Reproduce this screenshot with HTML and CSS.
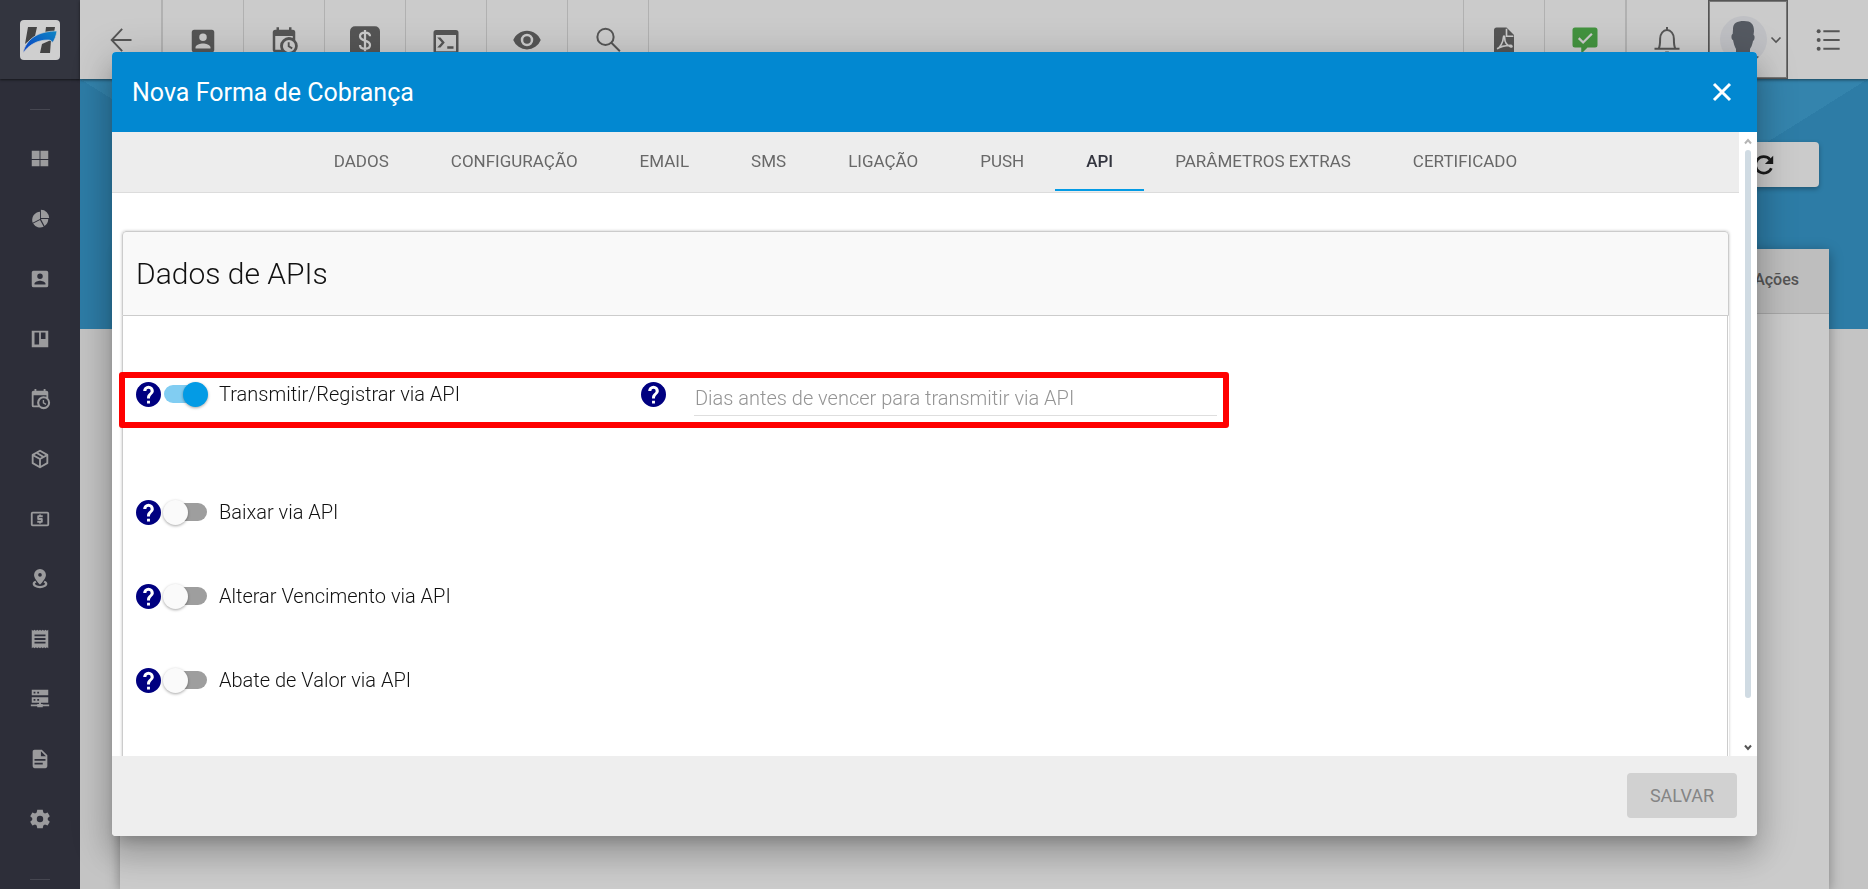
FILE: index.html
```html
<!DOCTYPE html>
<html lang="pt-BR">
<head>
<meta charset="utf-8">
<title>Nova Forma de Cobrança</title>
<link rel="stylesheet" href="styles.css">
</head>
<body>
<svg class="sprite" aria-hidden="true">
  <symbol id="help" viewBox="0 0 24 24"><circle cx="12" cy="12" r="11" fill="#fff"/><path fill="currentColor" fill-rule="evenodd" d="M12 0a12 12 0 1 0 0 24 12 12 0 0 0 0-24zm1.400 20.600h-2.800v-2.700h2.800zm2.500-9.300-1.100 1.100c-.86.880-1.400 1.600-1.400 3.400h-2.800V15c0-1.300.54-2.500 1.400-3.400l1.490-1.500c.44-.43.610-.9.610-1.500a2.100 2.100 0 0 0-4.200 0H6.900a5.100 5.100 0 0 1 10.200 0c0 1.060-.53 2.020-1.200 2.700z"/></symbol>
  <symbol id="account" viewBox="0 0 24 24"><path d="M6 17c0-2 4-3.100 6-3.100s6 1.100 6 3.100v1H6m9-9a3 3 0 0 1-6 0 3 3 0 0 1 6 0M3 5v14a2 2 0 0 0 2 2h14a2 2 0 0 0 2-2V5a2 2 0 0 0-2-2H5a2 2 0 0 0-2 2z"/></symbol>
  <symbol id="calendar" viewBox="0 0 24 24"><path d="M15 13h1.500v2.820l2.440 1.410-.75 1.300L15 16.690V13m4-5H5v11h4.670A7 7 0 0 1 19 9.670V8M5 21a2 2 0 0 1-2-2V5c0-1.110.89-2 2-2h1V1h2v2h8V1h2v2h1a2 2 0 0 1 2 2v6.100A7 7 0 0 1 11.100 21H5m11-9.850A4.850 4.850 0 0 0 11.150 16c0 2.680 2.170 4.850 4.850 4.850A4.850 4.850 0 0 0 20.850 16 4.850 4.850 0 0 0 16 11.150z"/></symbol>
</svg>

<div class="app">
  <aside class="sidebar">
    <a class="brand" href="#" aria-label="Início">
      <svg width="40" height="40" viewBox="0 0 40 40">
        <defs><linearGradient id="swoosh" x1="0" y1="1" x2="1" y2="0"><stop offset="0" stop-color="#0a3fc4"/><stop offset="1" stop-color="#0f86c4"/></linearGradient></defs>
        <rect width="40" height="40" rx="4" fill="#cfcfcf"/>
        <path fill="#444" d="M8 7h9l-2 9-10 8zM26 7h9l-1 6-9 2zM22 24l9-4-1 13h-10z"/>
        <path fill="url(#swoosh)" stroke="#cfcfcf" stroke-width=".7" d="M3 33C6 19 18 11 37 11c-1 5-2 9-5 12 0-2-1-3-4-3-11 0-19 5-25 13z"/>
      </svg>
    </a>
    <nav class="menu" aria-label="Menu principal">
      <span class="rule"></span>
      <a href="#" aria-label="Painel"><svg viewBox="0 0 24 24"><path d="M3 12V3h8.500v9zM12.500 12V3H21v9zM3 20v-7h8.500v7zM12.500 20v-7H21v7z"/></svg></a>
      <a href="#" aria-label="Relatórios"><svg viewBox="0 0 24 24"><path d="M13 2a9 9 0 0 1 9 9h-9zM12 4v8l-8 4A9 9 0 0 1 12 4zM13 12h8a9 9 0 0 1-4 7.500zM12 13l4 7.500A9 9 0 0 1 4.500 17z"/></svg></a>
      <a href="#" aria-label="Clientes"><svg><use href="#account"/></svg></a>
      <a href="#" aria-label="Quadro"><svg viewBox="0 0 24 24"><path fill-rule="evenodd" d="M3 3h18v18H3zm3 2v13h5V5zm7 0v7h5V5z"/></svg></a>
      <a href="#" aria-label="Agenda"><svg><use href="#calendar"/></svg></a>
      <a href="#" aria-label="Produtos"><svg viewBox="0 0 24 24"><path d="M21 16.500c0 .38-.21.710-.53.880l-7.900 4.440a.98.980 0 0 1-1.140 0l-7.900-4.440A1 1 0 0 1 3 16.500v-9c0-.38.210-.71.530-.88l7.900-4.440a.98.980 0 0 1 1.140 0l7.900 4.440c.32.170.530.500.530.880v9M12 4.150 10.110 5.220 16 8.610 17.960 7.500 12 4.150M6.040 7.500 12 10.850l1.960-1.100-5.880-3.400L6.040 7.500M5 15.910l6 3.380v-6.710L5 9.210v6.700m14 0v-6.700l-6 3.370v6.710l6-3.380z"/></svg></a>
      <a href="#" aria-label="Financeiro"><svg viewBox="0 0 24 24"><path d="M20 4H4a2 2 0 0 0-2 2v12a2 2 0 0 0 2 2h16a2 2 0 0 0 2-2V6a2 2 0 0 0-2-2m0 14H4V6h16v12M11 17h2v-1h1a1 1 0 0 0 1-1v-3a1 1 0 0 0-1-1h-3v-1h4V8h-2V7h-2v1h-1a1 1 0 0 0-1 1v3a1 1 0 0 0 1 1h3v1H9v2h2z"/></svg></a>
      <a href="#" aria-label="Mapa"><svg viewBox="0 0 24 24"><path fill-rule="evenodd" d="M12 1a6.500 6.500 0 0 0-6.500 6.500C5.500 12 12 18 12 18s6.500-6 6.500-10.500A6.500 6.500 0 0 0 12 1zm0 4.500a2 2 0 1 1 0 4 2 2 0 0 1 0-4zM7 14c-2 .6-3 1.700-3 3.300C4 20 7.500 22 12 22s8-2 8-4.700c0-1.600-1-2.700-3-3.300l-1.200 1.700c1 .3 1.700.8 1.700 1.500 0 1.300-2.500 2.300-5.500 2.300s-5.500-1-5.500-2.300c0-.7.700-1.200 1.700-1.500z"/></svg></a>
      <a href="#" aria-label="Recibos"><svg viewBox="0 0 24 24"><path fill-rule="evenodd" d="M3 22V2l1.500 1L6 2l1.500 1L9 2l1.500 1L12 2l1.500 1L15 2l1.500 1L18 2l1.500 1L21 2v20l-1.500-1-1.500 1-1.500-1-1.500 1-1.500-1-1.500 1-1.500-1L9 22l-1.500-1L6 22l-1.500-1zM6 7v2h12V7zm0 4v2h12v-2zm0 4v2h12v-2z"/></svg></a>
      <a href="#" aria-label="Servidores"><svg viewBox="0 0 24 24"><path fill-rule="evenodd" d="M3 2h18v6H3zm2 2v2h2V4zm4 0v2h2V4zM3 10h18v6h-8v1.500h2V18h7v2h-7v1H9v-1H2v-2h7v-.5h2V16H3zm2 2v2h2v-2zm4 0v2h2v-2z"/></svg></a>
      <a href="#" aria-label="Documentos"><svg viewBox="0 0 24 24"><path d="M13 9h5.500L13 3.500V9M6 2h8l6 6v12a2 2 0 0 1-2 2H6a2 2 0 0 1-2-2V4c0-1.110.89-2 2-2m9 16v-2H6v2h9m3-4v-2H6v2h12z"/></svg></a>
      <a href="#" aria-label="Configurações"><svg viewBox="0 0 24 24"><path fill-rule="evenodd" d="M9 2h6l.6 3 1.800 1 2.900-1 2.400 4-2.200 2v2l2.200 2-2.400 4-2.900-1-1.800 1-.6 3H9l-.6-3-1.800-1-2.900 1-2.400-4 2.200-2v-2L1.300 9l2.400-4 2.900 1 1.800-1zm3 6.500a3.500 3.500 0 1 0 0 7 3.500 3.500 0 0 0 0-7z"/></svg></a>
      <span class="rule"></span>
    </nav>
  </aside>

  <div class="main">
    <header class="topbar">
      <button class="cell first" aria-label="Voltar"><svg viewBox="0 0 24 24"><path class="line" d="M21 12H4.500M13 2.500 4 12l9 9.500"/></svg></button>
      <button class="cell" aria-label="Clientes"><svg><use href="#account" y="1"/></svg></button>
      <button class="cell" aria-label="Agenda"><svg><use href="#calendar" y="1"/></svg></button>
      <button class="cell" aria-label="Financeiro"><svg viewBox="0 0 24 24"><rect y="1" width="24" height="24" rx="4"/><path class="cut" d="M16 9c0-2-1.600-3-4-3s-4 1-4 3c0 4.500 8 2.500 8 7 0 2-1.800 3-4 3s-4-1-4-3M12 4v17"/></svg></button>
      <button class="cell" aria-label="Terminal"><svg viewBox="0 0 24 24"><path d="M18 19v-2h-5v2h5m-9.400-5L5 10h2.600L11 14l-3.400 4H5zM20 21H4V8h16v13m0-17H4a2 2 0 0 0-2 2v15a2 2 0 0 0 2 2h16a2 2 0 0 0 2-2V6a2 2 0 0 0-2-2z"/></svg></button>
      <button class="cell" aria-label="Visualizar"><svg viewBox="0 0 24 24"><path d="M12 9a3 3 0 1 0 0 6 3 3 0 0 0 0-6m0 8a5 5 0 1 1 0-10 5 5 0 0 1 0 10m0-12.500C7 4.500 2.730 7.610 1 12a11.800 11.800 0 0 0 22 0C21.270 7.610 17 4.500 12 4.500z"/></svg></button>
      <button class="cell" aria-label="Pesquisar"><svg viewBox="0 0 24 24"><circle class="line" cx="10" cy="9.500" r="6.500"/><path class="line" d="M14.500 14l7 7"/></svg></button>
      <span class="spacer"></span>
      <button class="cell" aria-label="PDF"><svg viewBox="0 0 24 24"><path d="M6 2h8l6 6v14a2 2 0 0 1-2 2H6a2 2 0 0 1-2-2V4c0-1.110.89-2 2-2z"/><path class="cut thin" d="M14 3v6h5.500M6.500 19c2-.5 5-5.500 5-9 0-1.500 1-1.500 1 0 0 3.500 2 6.500 5 7.500 1.500.3 1-1.300-.5-1.200-4 .2-8 1-10.500 2.700z"/></svg></button>
      <button class="cell" aria-label="Mensagens"><svg class="green" viewBox="0 0 24 24"><path d="M4 2h16a2 2 0 0 1 2 2v12a2 2 0 0 1-2 2h-6l-5 5v-5H4a2 2 0 0 1-2-2V4a2 2 0 0 1 2-2z"/><path class="cut" d="M7 10.500 10.500 14 17.500 7"/></svg></button>
      <button class="cell bell" aria-label="Notificações"><svg viewBox="0 0 24 24"><path class="line" d="M2 19h20M5.500 18.500c1-2 1-4 1-7.500C6.500 7 9 4 12 4s5.500 3 5.500 7c0 3.500 0 5.500 1 7.500M12 1.500V4M10.500 22h3"/></svg></button>
      <button class="user" aria-label="Usuário">
        <svg class="avatar" viewBox="0 0 47 47"><defs><clipPath id="round"><circle cx="23.500" cy="23.500" r="23.500"/></clipPath></defs><g clip-path="url(#round)"><path fill="#bfc0c4" d="M0 0h47v47H0z"/><path fill="#555a62" d="M13 13c0-6 4-8 11-8s10 3 10 10l-.5 4c1.500 0 1.500 5-.5 6-1 5-2 6-3 8v4c4 2 9 3 12 6v4H4v-4c3-3 9-4 12-6v-4c-1-2-2-4-3-9-2 0-2-6-.3-6z"/></g></svg>
        <svg class="caret" viewBox="0 0 12 8"><path class="line" d="M1.500 1.500 6 6l4.500-4.500"/></svg>
      </button>
      <button class="options" aria-label="Opções"><svg viewBox="0 0 24 24"><path class="line" d="M8 4.500h14M8 12h14M8 19.500h14"/><circle cx="4" cy="4.500" r="1.700"/><circle cx="4" cy="12" r="1.700"/><circle cx="4" cy="19.500" r="1.700"/></svg></button>
    </header>

    <div class="page">
      <div class="actions">
        <button class="refresh" aria-label="Atualizar"><svg viewBox="0 0 24 24"><path class="line" d="M20 15.500A9 9 0 1 1 18.500 6"/><path d="M22 2v9h-9z"/></svg></button>
      </div>
      <table class="list">
        <thead><tr><th>Ações</th></tr></thead>
        <tbody><tr><td></td></tr></tbody>
      </table>
    </div>
  </div>
</div>

<div class="backdrop">
  <section class="dialog" role="dialog" aria-labelledby="dialog-title">
    <header class="dialog-head">
      <h2 id="dialog-title">Nova Forma de Cobrança</h2>
      <button class="close" aria-label="Fechar"><svg viewBox="0 0 20 20"><path d="M2 2l16 16M18 2 2 18"/></svg></button>
    </header>
    <div class="dialog-body">
      <div class="content">
        <nav class="tabs" role="tablist">
          <button role="tab">DADOS</button>
          <button role="tab">CONFIGURAÇÃO</button>
          <button role="tab">EMAIL</button>
          <button role="tab">SMS</button>
          <button role="tab">LIGAÇÃO</button>
          <button role="tab">PUSH</button>
          <button role="tab" class="active" aria-selected="true">API</button>
          <button role="tab">PARÂMETROS EXTRAS</button>
          <button role="tab">CERTIFICADO</button>
        </nav>
        <div class="panel">
          <h3>Dados de APIs</h3>
          <div class="fields">
            <div class="row wide">
              <div class="field">
                <svg class="help"><use href="#help"/></svg>
                <label class="toggle"><input type="checkbox" role="switch" checked><span>Transmitir/Registrar via API</span></label>
              </div>
              <div class="field">
                <svg class="help"><use href="#help"/></svg>
                <input class="days" type="text" aria-label="Dias antes de vencer para transmitir via API" placeholder="Dias antes de vencer para transmitir via API">
              </div>
              <div class="highlight"></div>
            </div>
            <div class="row"><div class="field">
              <svg class="help"><use href="#help"/></svg>
              <label class="toggle"><input type="checkbox" role="switch"><span>Baixar via API</span></label>
            </div></div>
            <div class="row"><div class="field">
              <svg class="help"><use href="#help"/></svg>
              <label class="toggle"><input type="checkbox" role="switch"><span>Alterar Vencimento via API</span></label>
            </div></div>
            <div class="row"><div class="field">
              <svg class="help"><use href="#help"/></svg>
              <label class="toggle"><input type="checkbox" role="switch"><span>Abate de Valor via API</span></label>
            </div></div>
          </div>
        </div>
      </div>
      <div class="scrollbar" aria-hidden="true">
        <svg class="up" viewBox="0 0 8 7"><path d="M1 5.500 4 2l3 3.500"/></svg>
        <div class="track"><div class="thumb"></div></div>
        <svg class="down" viewBox="0 0 8 7"><path d="M1 1.500 4 5l3-3.500"/></svg>
      </div>
    </div>
    <footer class="dialog-foot"><button class="save" disabled>SALVAR</button></footer>
  </section>
</div>
</body>
</html>
```

FILE: styles.css
```css
* { box-sizing: border-box; }
body {
  margin: 0;
  height: 100vh;
  overflow: hidden;
  font-family: Roboto, "Liberation Sans", sans-serif;
  color: #111;
}
button { font: inherit; border: 0; padding: 0; background: none; color: inherit; }
.sprite { position: absolute; width: 0; height: 0; }
.line { fill: none; stroke: currentColor; stroke-width: 2; }

.app { display: flex; height: 100%; }

/* Sidebar */
.sidebar { flex: none; width: 80px; background: #2d2e39; color: #9b9b9d; }
.brand {
  display: flex;
  align-items: center;
  justify-content: center;
  height: 79px;
  background: #33353f;
  box-shadow: 0 1px 2px #15161b;
}
.menu { display: flex; flex-direction: column; align-items: center; padding-top: 30px; }
.menu a { display: flex; align-items: center; height: 60px; color: inherit; }
.menu svg { width: 22px; height: 22px; fill: currentColor; }
.rule { width: 20px; height: 1px; background: #464751; }
.rule + a { margin-top: 19px; }
a + .rule { margin-top: 30px; }

/* Top bar */
.main { flex: 1; display: flex; flex-direction: column; min-width: 0; background: #c4c4c4; }
.topbar {
  position: relative;
  z-index: 1;
  flex: none;
  display: flex;
  height: 79px;
  background: #cbcbcb;
  color: #555;
  box-shadow: 0 1px 3px rgba(0, 0, 0, .5);
}
.topbar button { display: flex; align-items: center; justify-content: center; }
.topbar .cell { width: 81px; border-right: 1px solid #b1b1b1; }
.topbar .first { width: 83px; border-right-width: 2px; }
.topbar svg { width: 30px; height: 30px; fill: currentColor; overflow: visible; }
.topbar .line { stroke-width: 1.6; }
.topbar .first svg, .topbar .options svg { height: 28px; width: 28px; }
.spacer { flex: 1; border-right: 1px solid #b1b1b1; }
.cut { fill: none; stroke: #cbcbcb; stroke-width: 1.8; }
.thin { stroke-width: 1.3; }
.topbar .green { fill: #43933f; }
.topbar .bell { width: 82px; padding-right: 2px; border-right: 0; border-left: 1px solid #b1b1b1; }
.topbar .user {
  width: 80px;
  gap: 3px;
  padding-left: 6px;
  border: 1px solid #555;
  outline: 1px solid #777;
  outline-offset: -2px;
}
.topbar .avatar { width: 47px; height: 47px; }
.topbar .caret { width: 12px; height: 8px; }
.options { width: 80px; }

/* Page behind the dialog */
.page {
  flex: 1;
  display: flex;
  flex-direction: column;
  padding: 63px 39px 0 40px;
  background:
    linear-gradient(#c4c4c4, #c4c4c4) 0 250px / 100% 100% no-repeat,
    linear-gradient(to top left, #2d7ca6 50%, #3484ad 50%) right top / 50% 560px no-repeat,
    linear-gradient(to top right, #2d7ca6 50%, #3484ad 50%) left top / 50% 560px no-repeat;
}
.actions { display: flex; justify-content: flex-end; padding-right: 10px; }
.refresh {
  display: flex;
  align-items: center;
  justify-content: center;
  width: 110px;
  height: 45px;
  border-radius: 4px;
  background: #cbcbcb;
  color: #1b1b1b;
  box-shadow: 0 2px 5px rgba(0, 0, 0, .3);
}
.refresh svg { width: 22px; height: 22px; fill: currentColor; }
.refresh .line { stroke-width: 3; }
.list {
  flex: 1;
  width: 100%;
  margin-top: 62px;
  border-collapse: collapse;
  background: #cbcbcb;
  box-shadow: 0 3px 12px rgba(0, 0, 0, .35);
}
.list th {
  height: 64px;
  padding: 0 30px 2px;
  border-bottom: 1px solid #a8a8a8;
  background: #bebebe;
  color: #555;
  font-size: 16px;
  font-weight: 500;
  text-align: right;
}
.list td { padding: 0; height: 512px; }

/* Dialog */
.backdrop { position: fixed; inset: 0; z-index: 2; display: flex; padding: 52px 111px 53px 112px; }
.dialog {
  flex: 1;
  display: flex;
  flex-direction: column;
  min-width: 0;
  overflow: hidden;
  border-radius: 4px;
  background: #fff;
  box-shadow: 0 10px 13px -6px rgba(0, 0, 0, .2), 0 20px 31px 3px rgba(0, 0, 0, .14), 0 8px 38px 7px rgba(0, 0, 0, .14);
}
.dialog-head {
  flex: none;
  display: flex;
  align-items: center;
  justify-content: space-between;
  height: 80px;
  padding: 0 25px 0 20px;
  background: #0288d1;
  color: #fff;
}
.dialog-head h2 { margin: 0; font-size: 25px; font-weight: 400; }
.close svg { display: block; width: 20px; height: 20px; fill: none; stroke: #fff; stroke-width: 3; }
.dialog-body { flex: 1; display: flex; min-height: 0; }
.content { flex: 1; min-width: 0; overflow-y: auto; scrollbar-width: none; }
.tabs {
  display: flex;
  justify-content: center;
  height: 61px;
  border-bottom: 1px solid #dcdcdc;
  background: #ededed;
}
.tabs button {
  padding: 1px 31px 0;
  border-bottom: 2px solid transparent;
  margin-bottom: 1px;
  color: #686868;
  font-size: 17px;
}
.tabs .active { border-color: #039be5; color: #33353f; font-weight: 500; }

.panel { margin: 38px 10px 16px; border-radius: 4px; box-shadow: 0 0 3px rgba(0, 0, 0, .25); }
.panel h3 {
  display: flex;
  align-items: center;
  height: 85px;
  margin: 0;
  padding-left: 13px;
  border: 1px solid #ccc;
  border-radius: 4px 4px 0 0;
  background: #f9f9f9;
  font-size: 30px;
  font-weight: 300;
}
.fields { margin-right: 1px; padding: 36px 13px 60px; border: 1px solid #ccc; border-top: 0; font-size: 20px; font-weight: 300; }
.row { position: relative; display: grid; grid-template-columns: 32% 37% 1fr; height: 84px; }
.wide { height: 118px; padding-bottom: 34px; }
.field { display: flex; align-items: center; }
.help { flex: none; width: 25px; height: 25px; color: #000080; }
.toggle { display: flex; align-items: center; gap: 12px; margin-left: 3px; }
.toggle input {
  display: flex;
  align-items: center;
  appearance: none;
  width: 43px;
  height: 18px;
  margin: 0;
  border-radius: 9px;
  background: #9e9e9e;
}
.toggle input::before {
  content: "";
  width: 25px;
  height: 25px;
  flex: none;
  margin-left: -1px;
  border-radius: 50%;
  background: #fafafa;
  box-shadow: 0 1px 3px rgba(0, 0, 0, .35);
}
.toggle input:checked { background: #81cdf2; }
.toggle input:checked::before { margin-left: 19px; background: #039be5; }
.days {
  flex: 1;
  min-width: 0;
  height: 40px;
  margin: 4px 8px 0 28px;
  padding: 4px 1px 0;
  border: 0;
  border-bottom: 1px solid #dedede;
  font: inherit;
}
.days::placeholder { color: #949494; opacity: 1; }
.highlight {
  position: absolute;
  grid-column: 1 / 3;
  top: 20px;
  left: -17px;
  right: -4px;
  height: 56px;
  border: 6px solid #f00;
  border-radius: 3px;
}

.scrollbar { flex: none; display: flex; flex-direction: column; align-items: center; width: 18px; padding: 6px 0 5px; }
.scrollbar svg { width: 8px; height: 7px; fill: none; stroke: #b5b5b5; stroke-width: 2; }
.scrollbar .down { stroke: #555; }
.track { flex: 1; width: 6px; margin: 5px 0; }
.thumb { width: 6px; height: 93%; border-radius: 3px; background: #d0dbe3; }

.dialog-foot {
  flex: none;
  display: flex;
  align-items: center;
  justify-content: flex-end;
  height: 80px;
  padding: 0 20px 2px 0;
  background: #eee;
}
.save { width: 110px; height: 45px; border-radius: 4px; background: #d1d1d1; color: #858585; font-size: 18px; }
```
